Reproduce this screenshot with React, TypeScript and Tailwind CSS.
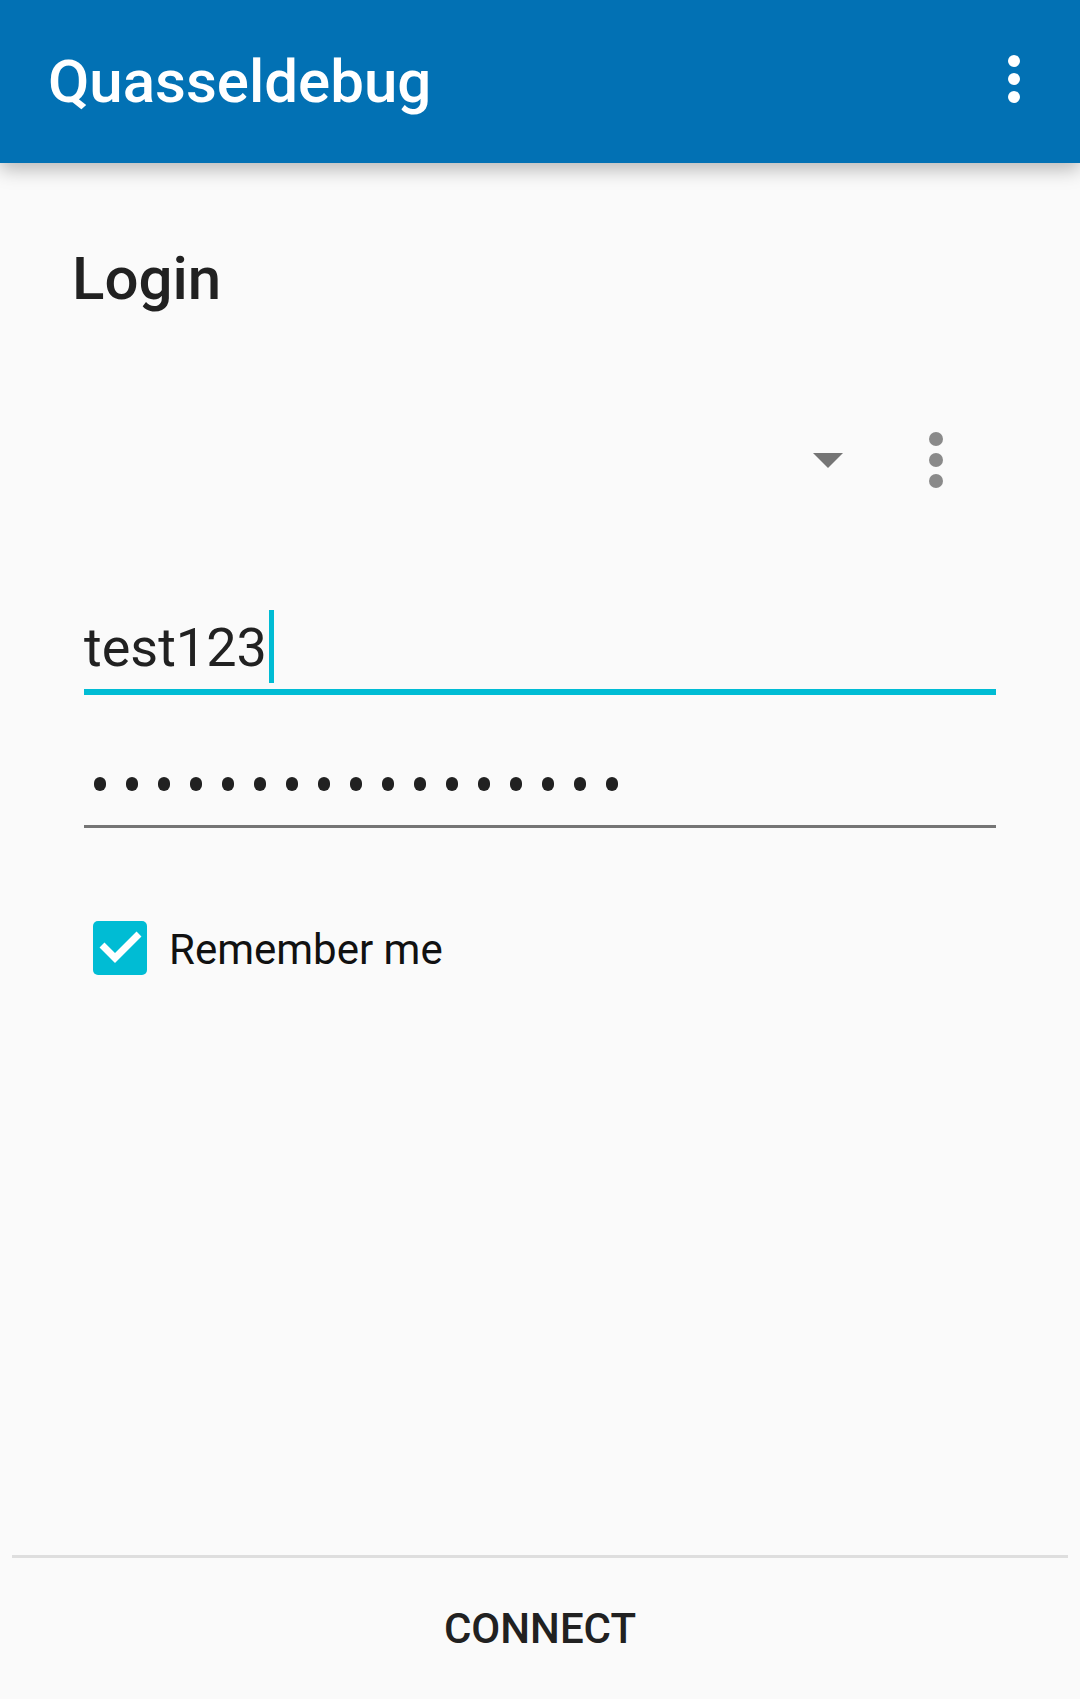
import React from 'react';

const font = { fontFamily: 'Roboto, "Noto Sans", sans-serif' };

function MoreVert({ size, color }: { size: number; color: string }) {
    return (
        <svg width={size} height={size} viewBox="0 0 24 24" fill={color}>
            <circle cx="12" cy="6" r="2" />
            <circle cx="12" cy="12" r="2" />
            <circle cx="12" cy="18" r="2" />
        </svg>
    );
}

export default function App() {
    return (
        <div className="h-[1699px] bg-[#fafafa] flex flex-col" style={font}>
            {/* app bar */}
            <header className="relative z-10 h-[163px] shrink-0 bg-[#0271b4] flex items-center justify-between pl-[48px] pr-[30px] shadow-[0_6px_18px_rgba(0,0,0,0.28)]">
                <h1 className="text-white text-[60px] leading-[60px] font-medium">Quasseldebug</h1>
                <div className="mb-[5px]">
                    <MoreVert size={72} color="#ffffff" />
                </div>
            </header>

            <main className="flex-1 flex flex-col">
                <h2 className="mt-[86px] pl-[72px] text-[60px] leading-[60px] font-medium text-[#212121]">Login</h2>

                {/* account spinner */}
                <div className="mt-[109px] h-[84px] flex items-center justify-end pr-[102px]">
                    <svg width="30" height="15" viewBox="0 0 30 15" className="mr-[51px]">
                        <polygon points="0,0 30,0 15,15" fill="#757575" />
                    </svg>
                    <MoreVert size={84} color="#8a8a8a" />
                </div>

                {/* user */}
                <div className="mt-[108px] mx-[84px]">
                    <div className="h-[73px] flex items-end">
                        <span className="text-[54px] leading-[54px] pb-[8px] text-[#212121]">test123</span>
                        <span className="ml-[2px] w-[5px] h-[73px] bg-[#00bcd4]" />
                    </div>
                    <div className="mt-[6px] h-[6px] bg-[#00bcd4]" />
                </div>

                {/* password */}
                <div className="mt-[82px] mx-[84px]">
                    <div className="flex gap-[20px] pl-[10px]">
                        {Array.from({ length: 17 }).map((_, i) => (
                            <span key={i} className="w-[12px] h-[14px] rounded-full bg-[#212121]" />
                        ))}
                    </div>
                    <div className="mt-[34px] h-[3px] bg-[#757575]" />
                </div>

                {/* remember me */}
                <label className="mt-[93px] ml-[93px] h-[54px] flex items-center">
                    <span className="w-[54px] h-[54px] rounded-[5px] bg-[#00bcd4] flex items-center justify-center">
                        <svg width="54" height="54" viewBox="0 0 54 54" fill="none">
                            <path d="M9 36 L22 49 L46 25" transform="translate(0,-12)" stroke="#ffffff" strokeWidth="7" />
                        </svg>
                    </span>
                    <span className="ml-[22px] mt-[3px] text-[42px] leading-[42px] text-[#111111]">Remember me</span>
                </label>
            </main>

            {/* footer */}
            <footer className="shrink-0">
                <div className="mx-[12px] h-[3px] bg-[#dedede]" />
                <div className="h-[141px] flex items-center justify-center">
                    <button className="text-[42px] leading-[42px] font-medium text-[#212121]">CONNECT</button>
                </div>
            </footer>
        </div>
    );
}
